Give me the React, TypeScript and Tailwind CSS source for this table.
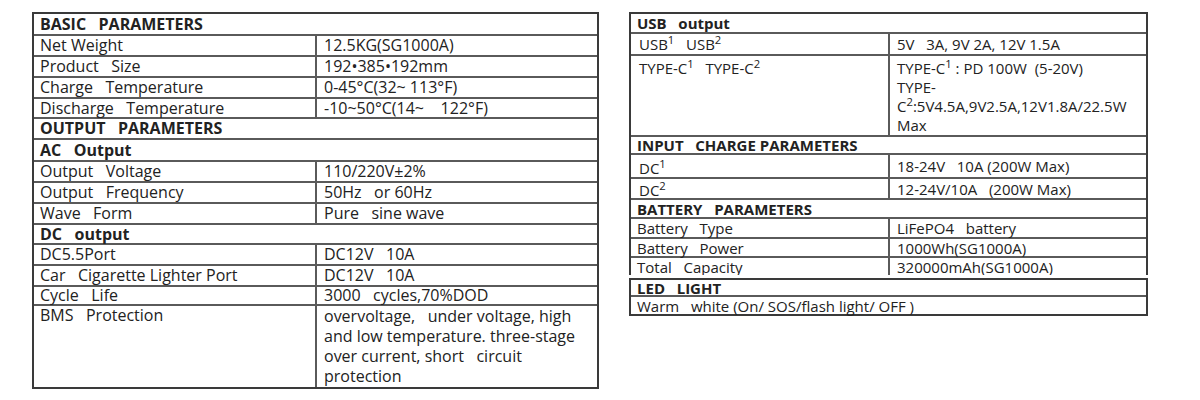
import React from 'react';

type RowProps = { label: React.ReactNode; value: React.ReactNode; h: string; split: string; last?: boolean };

const Head: React.FC<{ h: string; children: React.ReactNode }> = ({ h, children }) => (
	<div className={`${h} flex items-center border-b-2 border-[#5a5a5a] pl-[6px] font-bold whitespace-pre`}>{children}</div>
);

const Row: React.FC<RowProps> = ({ label, value, h, split, last }) => (
	<div className={`${h} flex ${last ? 'overflow-hidden' : 'border-b-2 border-[#5a5a5a]'}`}>
		<div className={`${split} flex shrink-0 items-center border-r-2 border-[#5a5a5a] pl-[6px] whitespace-pre`}>{label}</div>
		<div className="flex flex-1 items-center pl-[7px] whitespace-pre">{value}</div>
	</div>
);

const App: React.FC = () => {
	const L = 'w-[283px]';
	const R = 'w-[259px]';
	return (
		<div className="flex h-[400px] w-[1200px] items-start gap-[30px] bg-white pl-[32px] pt-[12px] font-['Open_Sans',sans-serif] text-[#222]">
			{/* left table */}
			<div className="flex w-[567px] flex-col border-2 border-[#3a3a3a] text-[16px] leading-[19px]">
				<Head h="h-[22px]">BASIC   PARAMETERS</Head>
				<Row h="h-[21px]" split={L} label="Net Weight" value="12.5KG(SG1000A)" />
				<Row h="h-[21px]" split={L} label="Product   Size" value="192•385•192mm" />
				<Row h="h-[21px]" split={L} label="Charge   Temperature" value="0-45°C(32~ 113°F)" />
				<Row h="h-[20px]" split={L} label="Discharge   Temperature" value="-10~50°C(14~    122°F)" />
				<Head h="h-[21px]">OUTPUT   PARAMETERS</Head>
				<Head h="h-[22px]">AC   Output</Head>
				<Row h="h-[21px]" split={L} label="Output   Voltage" value="110/220V±2%" />
				<Row h="h-[21px]" split={L} label="Output   Frequency" value="50Hz   or 60Hz" />
				<Row h="h-[21px]" split={L} label="Wave   Form" value="Pure   sine wave" />
				<Head h="h-[20px]">DC   output</Head>
				<Row h="h-[21px]" split={L} label="DC5.5Port" value="DC12V   10A" />
				<Row h="h-[21px]" split={L} label="Car   Cigarette Lighter Port" value="DC12V   10A" />
				<Row h="h-[19px]" split={L} label="Cycle   Life" value="3000   cycles,70%DOD" />
				<div className="flex h-[81px]">
					<div className={`${L} shrink-0 border-r-2 border-[#5a5a5a] pl-[6px] whitespace-pre`}>BMS   Protection</div>
					<div className="flex-1 pl-[7px] leading-[20px] whitespace-pre">
						{'overvoltage,   under voltage, high\nand low temperature. three-stage\nover current, short   circuit\nprotection'}
					</div>
				</div>
			</div>

			{/* right table */}
			<div className="flex w-[519px] flex-col text-[15px] leading-[18px]">
				<div className="flex flex-col border-x-2 border-t-2 border-[#3a3a3a]">
					<Head h="h-[20px]">USB   output</Head>
					<Row
						h="h-[22px]"
						split={R}
						label={
							<span className="pl-[2px]">
								USB<sup>1</sup>   USB<sup>2</sup>
							</span>
						}
						value="5V   3A, 9V 2A, 12V 1.5A"
					/>
					<div className="flex h-[81px] border-b-2 border-[#5a5a5a]">
						<div className={`${R} shrink-0 border-r-2 border-[#5a5a5a] pt-[3px] pl-[8px] whitespace-pre`}>
							TYPE-C<sup>1</sup>   TYPE-C<sup>2</sup>
						</div>
						<div className="flex-1 pt-[3px] pl-[7px] leading-[19px] whitespace-pre">
							<div>
								TYPE-C<sup>1</sup> : PD 100W  (5-20V)
							</div>
							<div>TYPE-</div>
							<div>
								C<sup>2</sup>:5V4.5A,9V2.5A,12V1.8A/22.5W
							</div>
							<div>Max</div>
						</div>
					</div>
					<Head h="h-[18px]">INPUT   CHARGE PARAMETERS</Head>
					<Row
						h="h-[24px]"
						split={R}
						label={
							<span className="pt-[4px] pl-[2px]">
								DC<sup>1</sup>
							</span>
						}
						value="18-24V   10A (200W Max)"
					/>
					<Row
						h="h-[21px]"
						split={R}
						label={
							<span className="pt-[3px] pl-[2px]">
								DC<sup>2</sup>
							</span>
						}
						value="12-24V/10A   (200W Max)"
					/>
					<Head h="h-[19px]">BATTERY   PARAMETERS</Head>
					<Row h="h-[20px]" split={R} label="Battery   Type" value="LiFePO4   battery" />
					<Row h="h-[19px]" split={R} label="Battery   Power" value="1000Wh(SG1000A)" />
					<Row h="h-[17px]" split={R} label="Total   Capacity" value="320000mAh(SG1000A)" last />
				</div>
				<div className="mt-[3px] flex flex-col border-2 border-[#3a3a3a]">
					<Head h="h-[17px]">LED   LIGHT</Head>
					<div className="flex h-[17px] items-center pl-[6px] whitespace-pre">Warm   white (On/ SOS/flash light/ OFF )</div>
				</div>
			</div>
		</div>
	);
};

export default App;
